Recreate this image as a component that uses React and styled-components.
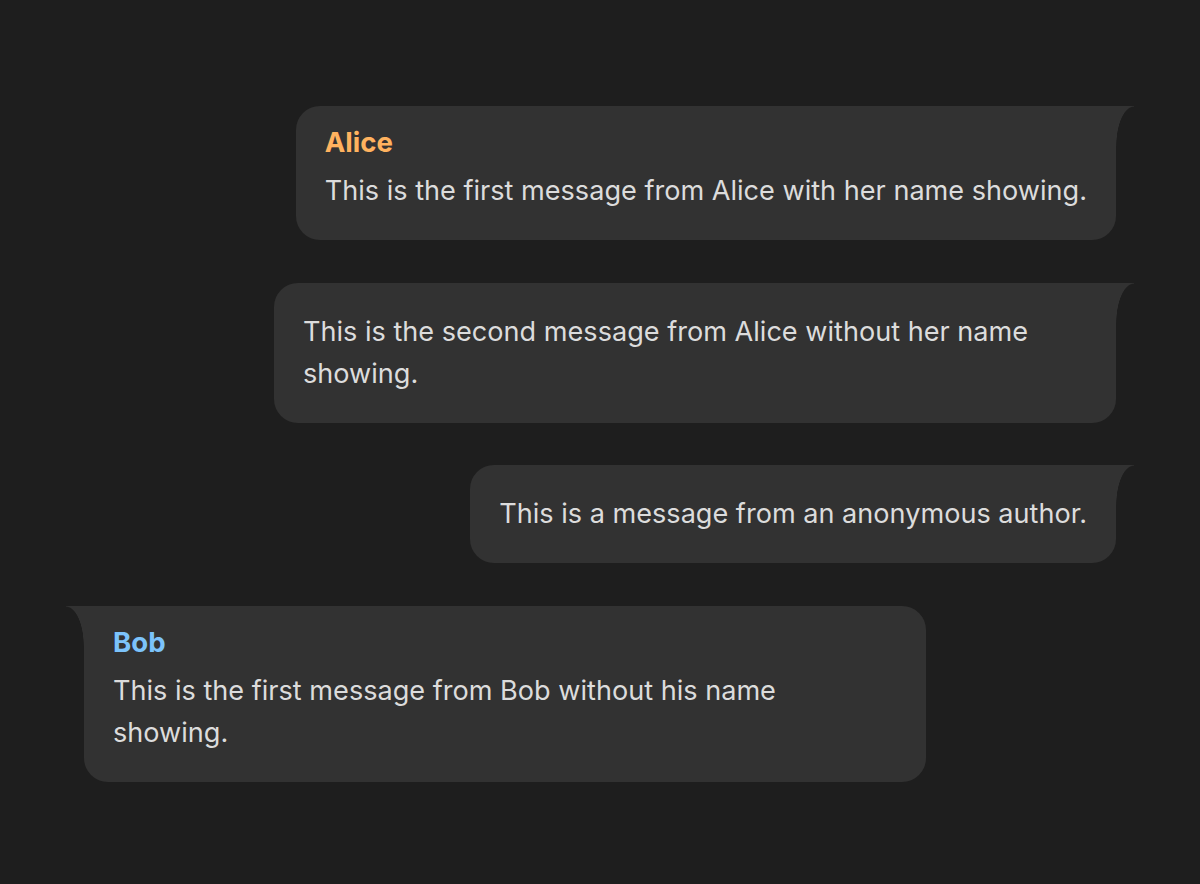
import React from 'react'
import styled, { createGlobalStyle } from 'styled-components';

const GlobalStyle = createGlobalStyle`
html, body {
  margin:0;
  padding:0;
  background:#1e1e1e;
}
body {
  font-family: Inter, "Noto Sans", sans-serif;
  -webkit-font-smoothing: antialiased;
}
`;

const Thread = styled.div`
min-height:884px;
box-sizing:border-box;
padding:106px 84px 40px 84px;
display:flex;
flex-direction:column;
gap:42.5px;
`;

const Row = styled.div`
display:flex;
justify-content:${p => (p.$mine ? 'flex-end' : 'flex-start')};
`;

const Bubble = styled.div`
position:relative;
max-width:842px;
box-sizing:border-box;
padding:${p => (p.$named ? '18px' : '28px')} 29px 28px 29px;
background:#323232;
border-radius:${p => (p.$mine ? '24px 0 24px 24px' : '0 24px 24px 24px')};

&::before {
  content:'';
  position:absolute;
  top:0;
  ${p => (p.$mine ? 'right:-18px;' : 'left:-18px;')}
  width:18px;
  height:40px;
  background:${p => p.$mine
    ? 'radial-gradient(18px 40px at 100% 100%, transparent 97%, #323232 100%)'
    : 'radial-gradient(18px 40px at 0% 100%, transparent 97%, #323232 100%)'};
}
`;

const Author = styled.div`
font-size:27.6px;
font-weight:700;
line-height:36px;
margin-bottom:10px;
color:${p => p.$color};
`;

const Text = styled.div`
font-size:27.1px;
line-height:42px;
color:#dcdcdc;
`;

const messages = [
  { mine: true, author: 'Alice', color: '#ffb25f', text: 'This is the first message from Alice with her name showing.' },
  { mine: true, text: 'This is the second message from Alice without her name showing.' },
  { mine: true, text: 'This is a message from an anonymous author.' },
  { mine: false, author: 'Bob', color: '#7cc3fb', text: 'This is the first message from Bob without his name showing.' },
];

const App = () => {
  return (
    <>
      <GlobalStyle />
      <Thread>
        {messages.map((m, i) => (
          <Row key={i} $mine={m.mine}>
            <Bubble $mine={m.mine} $named={!!m.author}>
              {m.author && <Author $color={m.color}>{m.author}</Author>}
              <Text>{m.text}</Text>
            </Bubble>
          </Row>
        ))}
      </Thread>
    </>
  )
}

export default App
